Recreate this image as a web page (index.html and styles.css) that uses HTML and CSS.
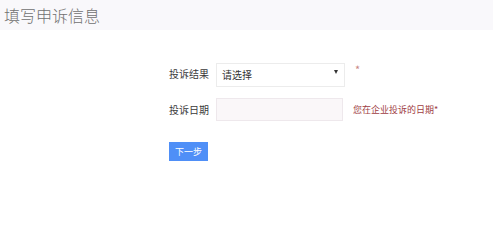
FILE: index.html
```html
<!DOCTYPE html>
<html lang="zh-CN">
<head>
    <meta charset="UTF-8">
    <meta name="viewport" content="width=device-width, initial-scale=1.0">
    <title>填写申诉信息</title>
    <link rel="stylesheet" href="styles.css">
</head>
<body>
    <div class="header">填写申诉信息</div>
    <form class="form" action="#" method="POST">
        <div class="form-row row-result">
            <label for="result">投诉结果</label>
            <span class="select-wrap">
                <select id="result" name="result">
                    <option value="">请选择</option>
                    <option value="1">已解决</option>
                    <option value="2">未解决</option>
                </select>
            </span>
            <span class="note star">*</span>
        </div>
        <div class="form-row row-date">
            <label for="date">投诉日期</label>
            <input type="text" id="date" name="date">
            <span class="note">您在企业投诉的日期*</span>
        </div>
        <div class="form-actions">
            <button type="submit">下一步</button>
        </div>
    </form>
</body>
</html>
```

FILE: styles.css
```css
body {
    margin: 0;
    background-color: #fff;
    font-family: "Noto Sans CJK SC", "Noto Sans", sans-serif;
    color: #333;
}
.header {
    height: 30px;
    line-height: 30px;
    padding-left: 4px;
    background-color: #f9f8fb;
    font-size: 16px;
    font-weight: 300;
    color: #707070;
}
.form {
    padding: 30px 0 0 169px;
}
.form-row {
    display: flex;
    align-items: center;
    margin-bottom: 11px;
}
.form-row label {
    width: 47px;
    font-size: 10px;
    color: #3a3a3a;
}
.select-wrap {
    position: relative;
    display: block;
}
.select-wrap::after {
    content: "";
    position: absolute;
    right: 7px;
    top: 10px;
    border-left: 2.5px solid transparent;
    border-right: 2.5px solid transparent;
    border-top: 4px solid #333;
}
.form-row select {
    appearance: none;
    -webkit-appearance: none;
    width: 129px;
    height: 24px;
    padding: 0 5px;
    box-sizing: border-box;
    border: 1px solid #ececec;
    border-radius: 0;
    background-color: #fff;
    font-family: inherit;
    font-size: 10px;
    color: #333;
}
.form-row input {
    width: 127px;
    height: 23px;
    box-sizing: border-box;
    border: 1px solid #eee8ec;
    background-color: #faf7f9;
    padding: 0 5px;
}
.note {
    margin-left: 10px;
    font-size: 9px;
    color: #9e3d43;
}
.star {
    align-self: flex-start;
    margin-top: 1px;
    font-size: 11px;
    color: #c98585;
}
.row-date .note {
    margin-left: 10px;
}
.form-actions {
    padding-top: 4px;
}
.form-actions button {
    width: 39px;
    height: 19px;
    padding: 0;
    border: none;
    background-color: #4f8ff7;
    color: #fff;
    font-family: inherit;
    font-size: 9px;
    cursor: pointer;
}
```
